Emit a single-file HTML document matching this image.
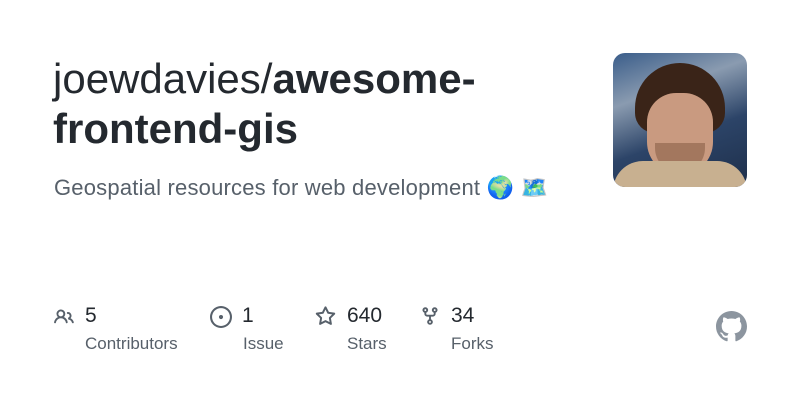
<!DOCTYPE html>
<html><head><style>
body{margin:0;width:800px;height:400px;background:#fff;font-family:"Liberation Sans",sans-serif;position:relative;overflow:hidden}
.t{position:absolute;left:53px;top:54px;font-size:42px;line-height:50px;color:#24292f;width:540px}
.d{position:absolute;left:54px;top:175px;font-size:22px;letter-spacing:0.2px;color:#57606a}
.av{position:absolute;left:613px;top:53px;width:134px;height:134px;border-radius:12px;overflow:hidden;background:linear-gradient(160deg,#3a5d8a 0%,#8a9bb0 30%,#2c4468 60%,#1e2f4a 100%)}
.s{position:absolute;top:304px;color:#24292f;font-size:21px}
.l{position:absolute;top:334px;color:#57606a;font-size:17px}
svg{position:absolute}
</style></head><body>
<div class="t">joewdavies/<b>awesome-<br>frontend-gis</b></div>
<div class="d">Geospatial resources for web development 🌍 🗺️</div>
<div class="av">
<div style="position:absolute;left:22px;top:10px;width:90px;height:70px;border-radius:45px 45px 20px 20px;background:#3a2418"></div>
<div style="position:absolute;left:34px;top:40px;width:66px;height:82px;border-radius:30px 30px 34px 34px;background:#c99a80"></div>
<div style="position:absolute;left:42px;top:90px;width:50px;height:30px;border-radius:0 0 25px 25px;background:#8a6048;opacity:.6"></div>
<div style="position:absolute;left:0;top:108px;width:134px;height:30px;border-radius:40px 40px 0 0;background:#c8b090"></div>
</div>
<svg style="left:54px;top:307px" width="20" height="20" viewBox="0 0 16 16" fill="#57606a"><path d="M2 5.5a3.5 3.5 0 1 1 5.898 2.549 5.508 5.508 0 0 1 3.034 4.084.75.75 0 1 1-1.482.235 4 4 0 0 0-7.9 0 .75.75 0 0 1-1.482-.236A5.507 5.507 0 0 1 3.102 8.05 3.493 3.493 0 0 1 2 5.5ZM11 4a3.001 3.001 0 0 1 2.22 5.018 5.01 5.01 0 0 1 2.56 3.012.749.749 0 0 1-.885.954.752.752 0 0 1-.549-.514 3.507 3.507 0 0 0-2.522-2.372.75.75 0 0 1-.574-.73v-.352a.75.75 0 0 1 .416-.672A1.5 1.5 0 0 0 11 5.5.75.75 0 0 1 11 4Zm-5.5-.5a2 2 0 1 0-.001 3.999A2 2 0 0 0 5.5 3.5Z"/></svg>
<div class="s" style="left:85px">5</div><div class="l" style="left:85px">Contributors</div>
<svg style="left:210px;top:306px" width="22" height="22" viewBox="0 0 16 16" fill="#57606a"><path d="M8 9.5a1.5 1.5 0 1 0 0-3 1.5 1.5 0 0 0 0 3Z"/><path d="M8 0a8 8 0 1 1 0 16A8 8 0 0 1 8 0ZM1.5 8a6.5 6.5 0 1 0 13 0 6.5 6.5 0 0 0-13 0Z"/></svg>
<div class="s" style="left:242px">1</div><div class="l" style="left:243px">Issue</div>
<svg style="left:315px;top:306px" width="21" height="21" viewBox="0 0 16 16" fill="#57606a"><path d="M8 .25a.75.75 0 0 1 .673.418l1.882 3.815 4.21.612a.75.75 0 0 1 .416 1.279l-3.046 2.97.719 4.192a.751.751 0 0 1-1.088.791L8 12.347l-3.766 1.98a.75.75 0 0 1-1.088-.79l.72-4.194L.818 6.374a.75.75 0 0 1 .416-1.28l4.21-.611L7.327.668A.75.75 0 0 1 8 .25Zm0 2.445L6.615 5.5a.75.75 0 0 1-.564.41l-3.097.45 2.24 2.184a.75.75 0 0 1 .216.664l-.528 3.084 2.769-1.456a.75.75 0 0 1 .698 0l2.77 1.456-.53-3.084a.75.75 0 0 1 .216-.664l2.24-2.183-3.096-.45a.75.75 0 0 1-.564-.41L8 2.694Z"/></svg>
<div class="s" style="left:347px">640</div><div class="l" style="left:347px">Stars</div>
<svg style="left:420px;top:306px" width="20" height="20" viewBox="0 0 16 16" fill="#57606a"><path d="M5 5.372v.878c0 .414.336.75.75.75h4.5a.75.75 0 0 0 .75-.75v-.878a2.25 2.25 0 1 1 1.5 0v.878a2.25 2.25 0 0 1-2.25 2.25h-1.5v2.128a2.251 2.251 0 1 1-1.5 0V8.5h-1.5A2.25 2.25 0 0 1 3.5 6.250v-.878a2.25 2.25 0 1 1 1.5 0ZM5 3.25a.75.75 0 1 0-1.5 0 .75.75 0 0 0 1.5 0Zm6.75.75a.75.75 0 1 0 0-1.5.75.75 0 0 0 0 1.5Zm-3 8.75a.75.75 0 1 0-1.5 0 .75.75 0 0 0 1.5 0Z"/></svg>
<div class="s" style="left:451px">34</div><div class="l" style="left:451px">Forks</div>
<svg style="left:716px;top:311px" width="31" height="31" viewBox="0 0 16 16" fill="#8c959f"><path d="M8 0c4.420 0 8 3.58 8 8a8.013 8.013 0 0 1-5.45 7.59c-.4.08-.55-.17-.55-.38 0-.27.01-1.13.01-2.2 0-.75-.25-1.230-.54-1.48 1.78-.2 3.65-.88 3.65-3.950 0-.88-.31-1.59-.82-2.15.08-.2.36-1.02-.08-2.12 0 0-.67-.22-2.2.82-.64-.18-1.32-.27-2-.27-.68 0-1.36.09-2 .27-1.530-1.03-2.2-.82-2.2-.82-.44 1.1-.16 1.92-.08 2.12-.51.56-.82 1.28-.82 2.15 0 3.06 1.86 3.75 3.64 3.95-.23.2-.44.55-.51 1.07-.46.21-1.61.55-2.33-.66-.15-.24-.6-.83-1.23-.82-.67.01-.27.38.01.53.34.19.73.9.82 1.13.16.45.68 1.31 2.69.94 0 .67.01 1.3.01 1.49 0 .21-.15.45-.55.38A7.995 7.995 0 0 1 0 8c0-4.420 3.58-8 8-8Z"/></svg>
</body></html>
